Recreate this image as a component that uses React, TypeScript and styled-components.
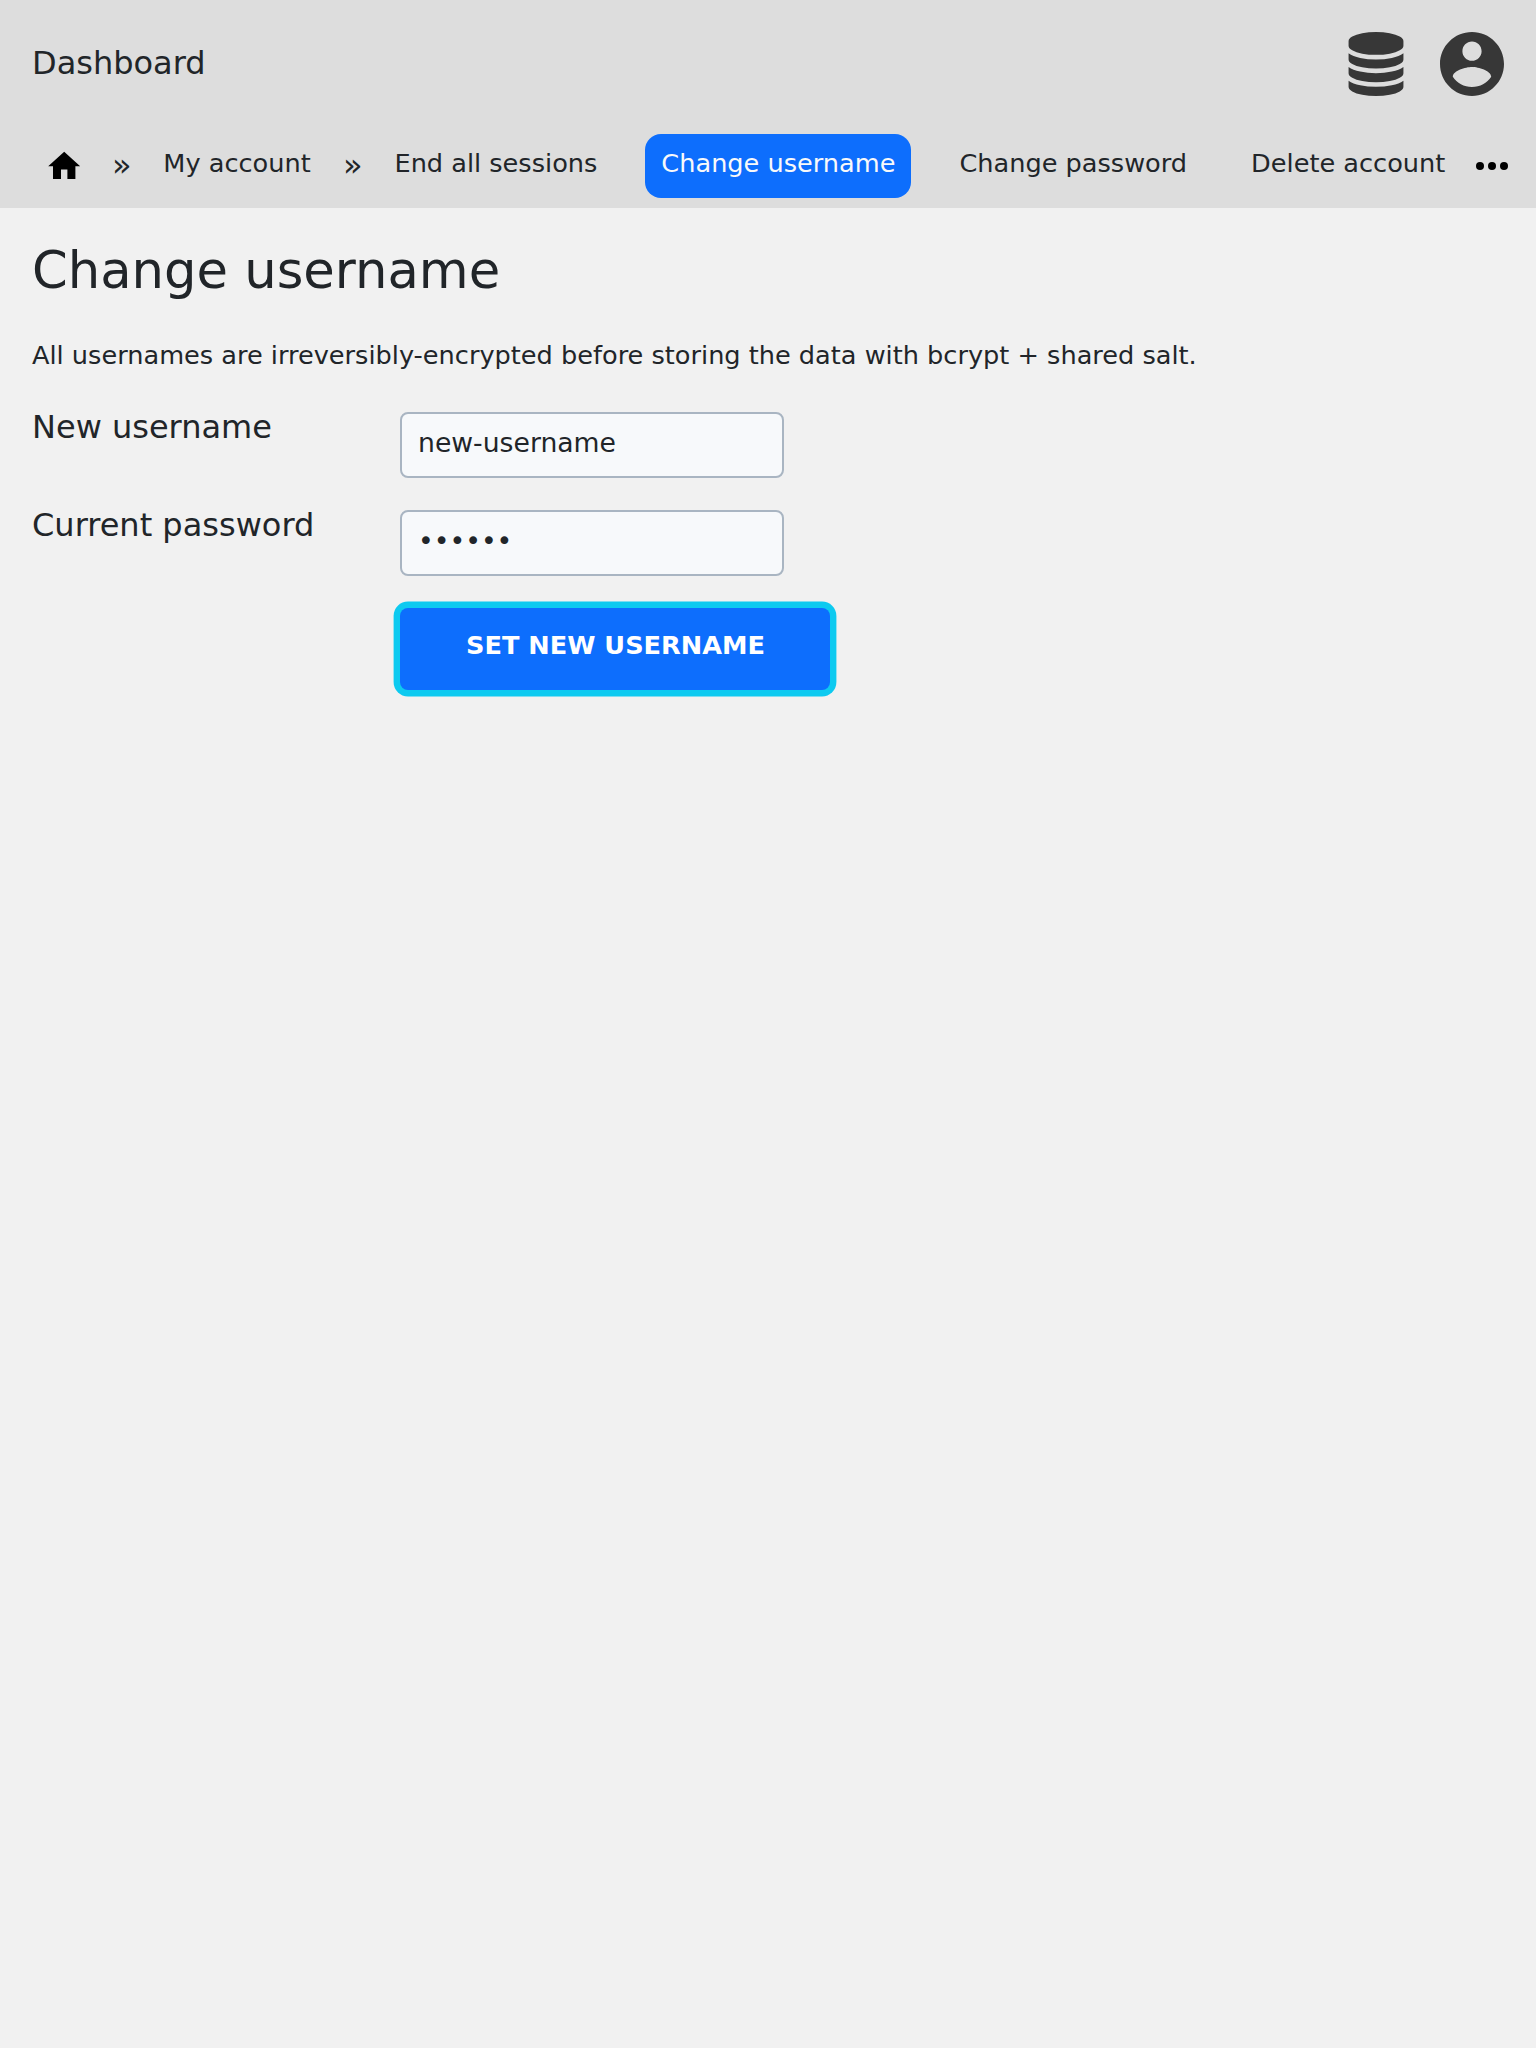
import React from "react";
import styled, { createGlobalStyle, css } from "styled-components";

const GlobalStyle = createGlobalStyle`
  *, *::before, *::after { box-sizing: border-box; }
  body {
    margin: 0;
    background: #f1f1f1;
    color: #212529;
    font-family: "DejaVu Sans", Verdana, sans-serif;
    font-size: 25.6px;
  }
`;

const Header = styled.header`
  height: 208px;
  background: #ddd;
`;

const TopBar = styled.div`
  display: flex;
  align-items: flex-start;
  justify-content: space-between;
  height: 134px;
  padding: 32px 32px 0;
`;

const Brand = styled.div`
  font-size: 32px;
  line-height: 62px;
`;

const Actions = styled.div`
  display: flex;
  gap: 32px;
  color: #373737;
`;

const Glyph = styled.svg`
  display: block;
  flex: none;
  fill: currentColor;
`;

const Nav = styled.nav`
  display: flex;
  align-items: flex-start;
  height: 64px;
  padding-left: 44.8px;
  white-space: nowrap;
`;

const HomeLink = styled.a`
  width: 38.4px;
  margin-right: 12.4px;
  padding-top: 13.3px;
  color: #000;
`;

const Separator = styled.span`
  width: 19.6px;
  margin: 0 15.8px 0 16.4px;
  font-size: 32px;
  line-height: 63px;
`;

const NavLink = styled.a<{ $active?: boolean; $spaced?: boolean }>`
  height: 64px;
  margin-left: ${(p) => (p.$spaced ? 32 : 0)}px;
  padding: 0 16px;
  border-radius: 16px;
  line-height: 58px;
  color: inherit;
  ${(p) =>
    p.$active &&
    css`
      background: #0d6efd;
      color: #f8f9fa;
    `}
`;

const MoreButton = styled.a`
  margin-left: 6.6px;
  padding-top: 8px;
  color: #000;
`;

const Main = styled.main`
  padding: 31px 32px 32px;
`;

const Title = styled.h1`
  margin: 0;
  font-size: 51.2px;
  font-weight: 400;
  line-height: 62px;
`;

const Note = styled.p`
  margin: 32px 0 0;
  line-height: 44px;
`;

const Form = styled.form`
  display: grid;
  grid-template-columns: 368px max-content;
  row-gap: 32px;
  margin-top: 35px;
`;

const Label = styled.label`
  font-size: 32px;
  line-height: 30px;
`;

const Input = styled.input`
  width: 384px;
  height: 66px;
  padding: 0 16px 6px;
  border: 2px solid #a9b5c2;
  border-radius: 8px;
  outline: none;
  background: #f7f9fb;
  color: #212529;
  font-family: inherit;
  font-size: 26.667px;
`;

const Submit = styled.button`
  grid-column: 2;
  justify-self: start;
  width: 430px;
  height: 82px;
  padding: 0 0 8px 1px;
  border: 0;
  border-radius: 8px;
  background: #0d6efd;
  box-shadow: 0 0 0 6.4px #0dcaf0;
  color: #fff;
  font-family: inherit;
  font-size: 25.6px;
  font-weight: 700;
  text-transform: uppercase;
`;

const DatabaseIcon = () => (
  <Glyph width="64" height="64" viewBox="0 0 1536 1792">
    <path d="M768 768q237 0 443-43t325-127v170q0 69-103 128t-280 93.5-385 34.5-385-34.5-280-93.5-103-128v-170q119 84 325 127t443 43zm0 768q237 0 443-43t325-127v170q0 69-103 128t-280 93.5-385 34.5-385-34.5-280-93.5-103-128v-170q119 84 325 127t443 43zm0-384q237 0 443-43t325-127v170q0 69-103 128t-280 93.5-385 34.5-385-34.5-280-93.5-103-128v-170q119 84 325 127t443 43zm0-1152q208 0 385 34.5t280 93.5 103 128v128q0 69-103 128t-280 93.5-385 34.5-385-34.5-280-93.5-103-128v-128q0-69 103-128t280-93.5 385-34.5z" />
  </Glyph>
);

const AccountIcon = () => (
  <Glyph width="64" height="64" viewBox="2 2 20 20">
    <path d="M12 2C6.48 2 2 6.48 2 12s4.48 10 10 10 10-4.48 10-10S17.52 2 12 2zm0 3c1.66 0 3 1.34 3 3s-1.34 3-3 3-3-1.34-3-3 1.34-3 3-3zm0 14.2c-2.5 0-4.71-1.28-6-3.22.03-1.99 4-3.08 6-3.08 1.99 0 5.97 1.09 6 3.08-1.29 1.94-3.5 3.22-6 3.22z" />
  </Glyph>
);

const HomeIcon = () => (
  <Glyph width="38.4" height="38.4" viewBox="0 0 24 24">
    <path d="M10 20v-6h4v6h5v-8h3L12 3 2 12h3v8z" />
  </Glyph>
);

const MoreIcon = () => (
  <Glyph width="48" height="48" viewBox="0 0 24 24">
    <circle cx="6" cy="12" r="2" />
    <circle cx="12" cy="12" r="2" />
    <circle cx="18" cy="12" r="2" />
  </Glyph>
);

export default function App() {
  return (
    <>
      <GlobalStyle />
      <Header>
        <TopBar>
          <Brand>Dashboard</Brand>
          <Actions>
            <DatabaseIcon />
            <AccountIcon />
          </Actions>
        </TopBar>
        <Nav>
          <HomeLink>
            <HomeIcon />
          </HomeLink>
          <Separator>»</Separator>
          <NavLink>My account</NavLink>
          <Separator>»</Separator>
          <NavLink>End all sessions</NavLink>
          <NavLink $spaced $active>
            Change username
          </NavLink>
          <NavLink $spaced>Change password</NavLink>
          <NavLink $spaced>Delete account</NavLink>
          <MoreButton>
            <MoreIcon />
          </MoreButton>
        </Nav>
      </Header>
      <Main>
        <Title>Change username</Title>
        <Note>
          All usernames are irreversibly-encrypted before storing the data with
          bcrypt + shared salt.
        </Note>
        <Form>
          <Label htmlFor="new-username">New username</Label>
          <Input id="new-username" type="text" defaultValue="new-username" />
          <Label htmlFor="current-password">Current password</Label>
          <Input
            id="current-password"
            type="password"
            defaultValue="secret"
          />
          <Submit type="button">Set new username</Submit>
        </Form>
      </Main>
    </>
  );
}
